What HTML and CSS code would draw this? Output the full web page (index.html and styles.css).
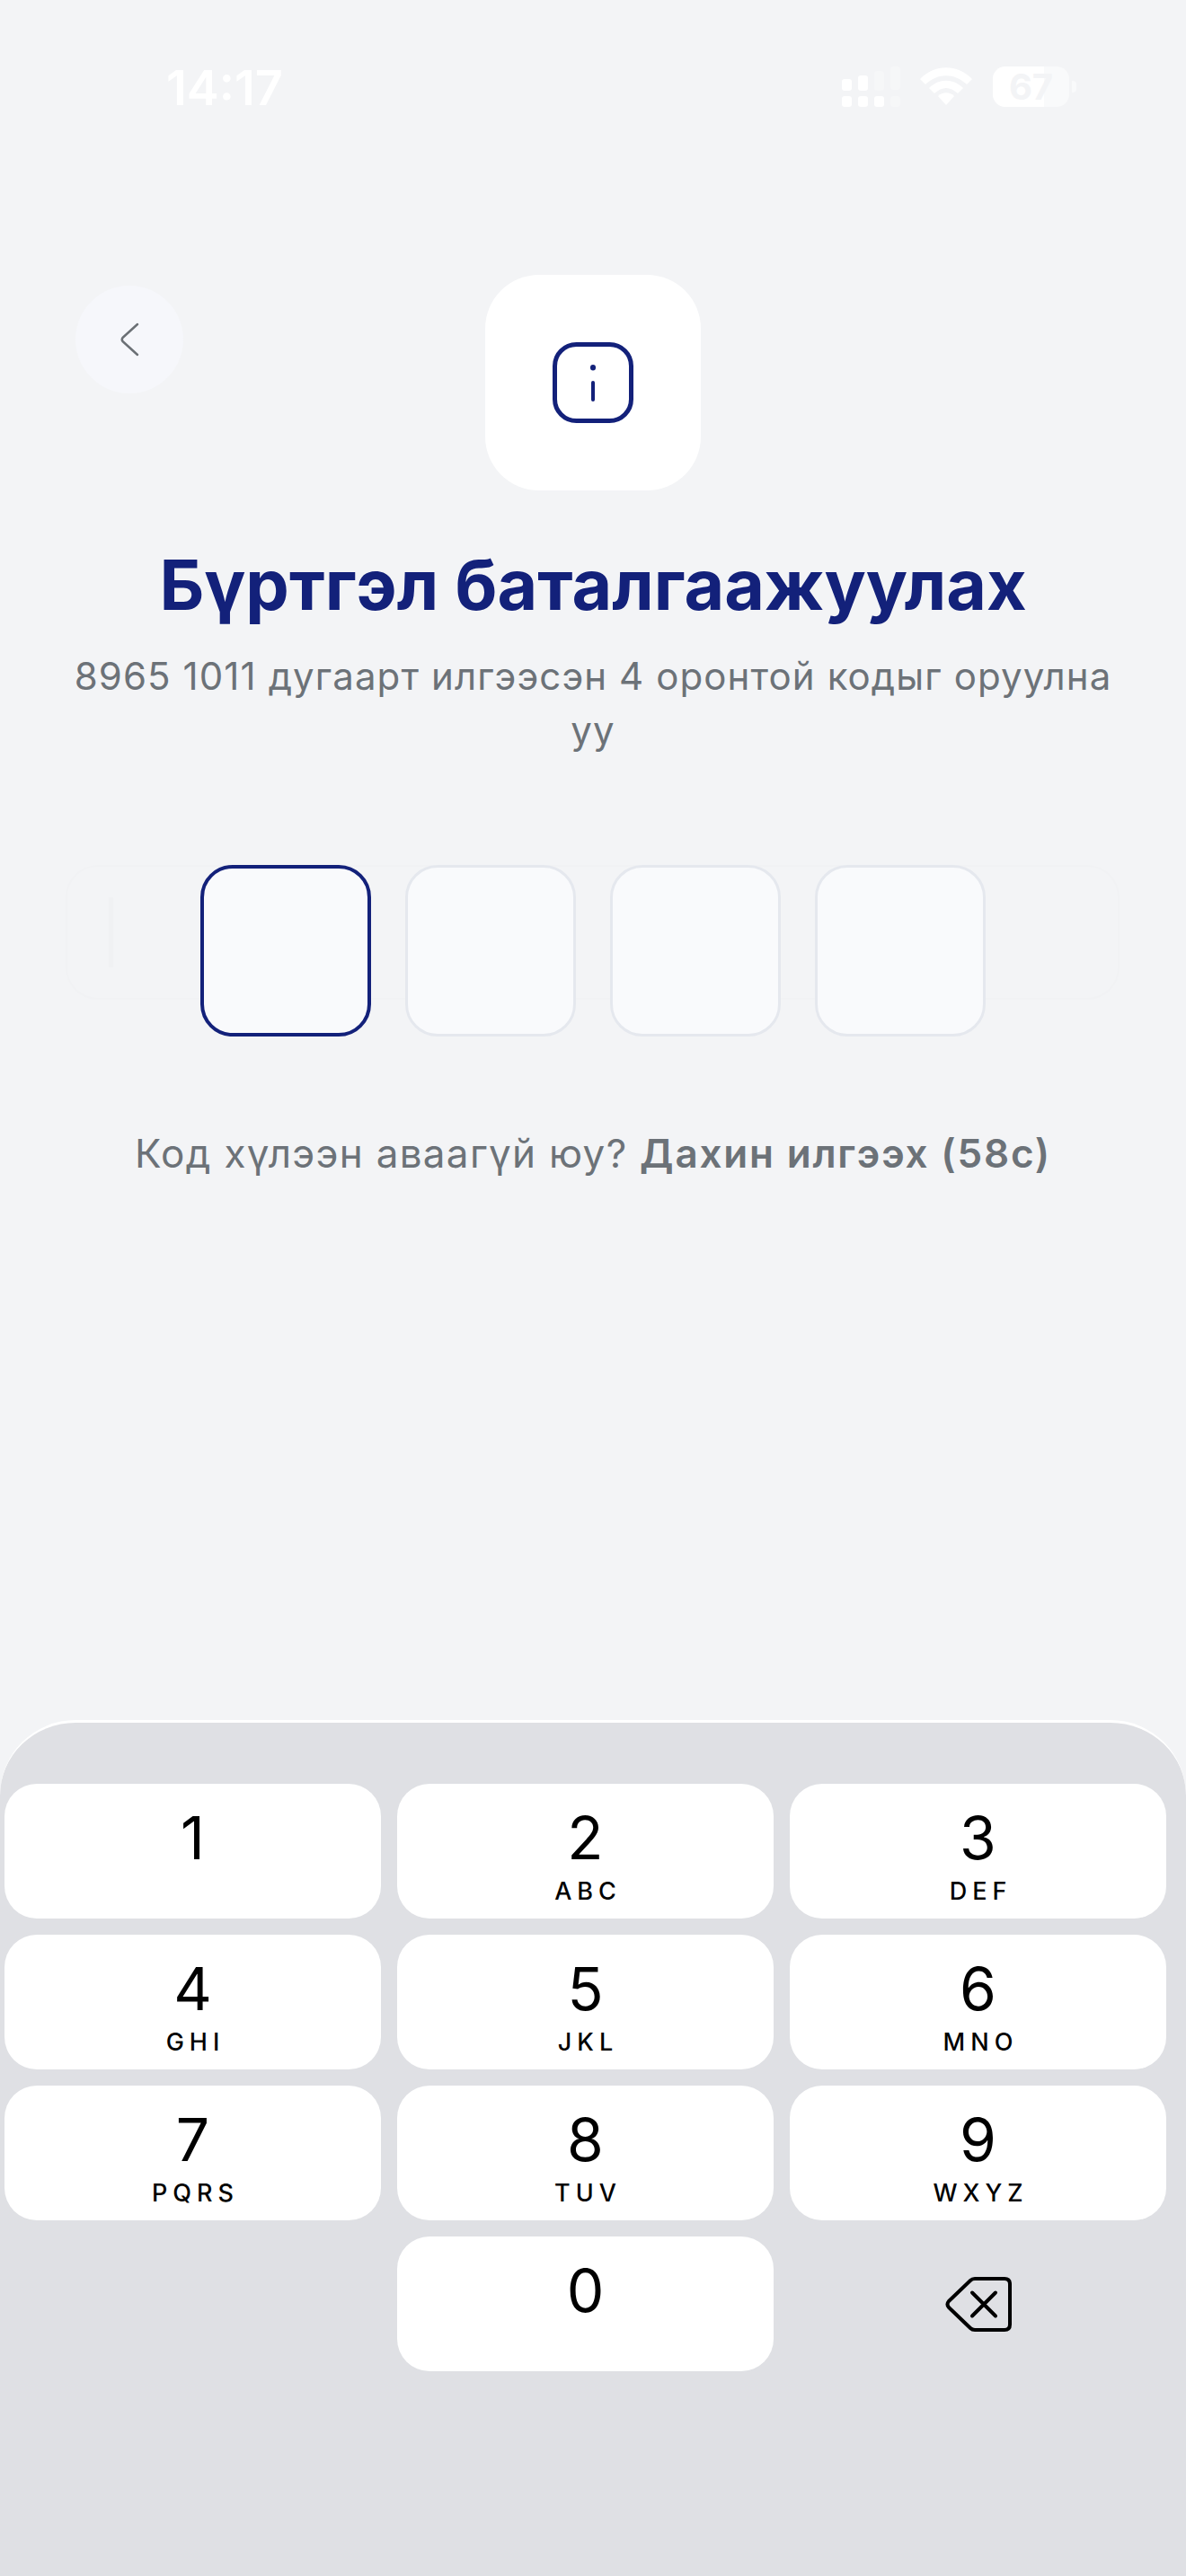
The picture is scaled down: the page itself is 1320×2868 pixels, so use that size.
FILE: index.html
```html
<!DOCTYPE html>

<html>

<head>
  <meta charset="utf-8">
  <title>Бүртгэл баталгаажуулах</title>
  <link rel="stylesheet" href="styles.css">
</head>

<body>

  <div class="screen">

    <div class="status-bar">
      <span class="time">14:17</span>
      <div class="status-icons">
        <svg class="signal" width="65" height="46" viewBox="0 0 65 46" fill="#fff">
          <rect x="0" y="14" width="11" height="13" rx="3" />
          <rect x="18" y="10" width="11" height="17" rx="3" />
          <rect x="36" y="5" width="11" height="22" rx="3" opacity=".25" />
          <rect x="54" y="0" width="11" height="26" rx="3" opacity=".25" />
          <rect x="0" y="33" width="11" height="12" rx="3" />
          <rect x="18" y="33" width="11" height="12" rx="3" />
          <rect x="36" y="33" width="11" height="12" rx="3" />
          <rect x="54" y="33" width="11" height="12" rx="3" opacity=".25" />
        </svg>
        <svg class="wifi" width="58" height="42" viewBox="0 0 58 42" fill="#fff">
          <path d="M0 13 C16 -4 42 -4 58 13 L52 19 C38 6 20 6 6 19 Z" />
          <path d="M10 23 C21 12 37 12 48 23 L42 29 C33 21 25 21 16 29 Z" />
          <path d="M20 32 C25 27 33 27 38 32 L29 42 Z" />
        </svg>
        <div class="battery">
          <div class="battery-body">
            <div class="battery-level"></div>
            <span class="battery-text">67</span>
          </div>
          <div class="battery-nub"></div>
        </div>
      </div>
    </div>

    <div class="top">
      <button type="button" class="back-btn">
        <svg width="24" height="38" viewBox="0 0 24 38" fill="none" stroke="#6b7075" stroke-width="2.5" stroke-linecap="round" stroke-linejoin="round">
          <path d="M21 2 L4.5 17 Q3 19 4.5 21 L21 36" />
        </svg>
      </button>
      <div class="info-card">
        <svg width="94" height="94" viewBox="0 0 94 94" fill="none" stroke="#13217a" stroke-width="5" stroke-linecap="round">
          <rect x="4.500" y="4.500" width="85" height="85" rx="24" />
          <path d="M47 47 V66" stroke-width="4" />
          <path d="M47 30 V30.500" stroke-width="6" />
        </svg>
      </div>
    </div>

    <h1 class="title">Бүртгэл баталгаажуулах</h1>
    <p class="subtitle">8965 1011 дугаарт илгээсэн 4 оронтой кодыг оруулна уу</p>

    <div class="otp">
      <div class="otp-input"><span class="otp-caret"></span></div>
      <div class="otp-box otp-box-active"></div>
      <div class="otp-box"></div>
      <div class="otp-box"></div>
      <div class="otp-box"></div>
    </div>

    <p class="resend">Код хүлээн аваагүй юу? <b>Дахин илгээх (58с)</b></p>

    <div class="keypad">
      <div class="key"><span class="digit">1</span><span class="letters"></span></div>
      <div class="key"><span class="digit">2</span><span class="letters">ABC</span></div>
      <div class="key"><span class="digit">3</span><span class="letters">DEF</span></div>
      <div class="key"><span class="digit">4</span><span class="letters">GHI</span></div>
      <div class="key"><span class="digit">5</span><span class="letters">JKL</span></div>
      <div class="key"><span class="digit">6</span><span class="letters">MNO</span></div>
      <div class="key"><span class="digit">7</span><span class="letters">PQRS</span></div>
      <div class="key"><span class="digit">8</span><span class="letters">TUV</span></div>
      <div class="key"><span class="digit">9</span><span class="letters">WXYZ</span></div>
      <div class="key key-empty"></div>
      <div class="key"><span class="digit">0</span><span class="letters"></span></div>
      <div class="key key-empty">
        <svg width="75" height="65" viewBox="0 0 75 65" fill="none" stroke="#000" stroke-width="4" stroke-linecap="round" stroke-linejoin="round">
          <path d="M34 4 H67 Q73 4 73 10 V55 Q73 61 67 61 H34 Q31 61 29 59 L5 36 Q2 32.500 5 29 L29 6 Q31 4 34 4 Z" />
          <path d="M31 19.500 L57 45.500 M57 19.500 L31 45.500" />
        </svg>
      </div>
    </div>

  </div>

</body>

</html>
```

FILE: styles.css
```css
* {
  box-sizing: border-box;
}

html,
body {
  margin: 0;
  padding: 0;
}

body {
  background: #f3f4f6;
  font-family: "Inter", "Noto Sans", sans-serif;
}

.screen {
  display: flex;
  flex-direction: column;
  height: 2868px;
  overflow: hidden;
}

/* Status bar */
.status-bar {
  display: flex;
  justify-content: space-between;
  align-items: flex-start;
  height: 306px;
  padding: 66px 122px 0 185px;
}

.time {
  color: #fff;
  font-size: 54px;
  font-weight: 600;
  line-height: 64px;
}

.status-icons {
  display: flex;
  align-items: flex-start;
  padding-top: 8px;
}

.signal {
  margin-right: 22px;
}

.wifi {
  margin-top: 1px;
  margin-right: 23px;
}

.battery {
  display: flex;
  align-items: center;
  gap: 3px;
}

.battery-body {
  position: relative;
  width: 85px;
  height: 45px;
  border-radius: 14px;
  background: rgba(255, 255, 255, .5);
  text-align: center;
}

.battery-level {
  position: absolute;
  left: 0;
  top: 0;
  bottom: 0;
  width: 57px;
  border-radius: 14px 0 0 14px;
  background: #fff;
}

.battery-text {
  position: relative;
  display: block;
  color: #f3f4f6;
  font-size: 40px;
  font-weight: 700;
  line-height: 45px;
}

.battery-nub {
  width: 5px;
  height: 13px;
  border-radius: 0 4px 4px 0;
  background: rgba(255, 255, 255, .5);
}

/* Back button + icon */
.top {
  display: grid;
  grid-template-columns: 1fr 240px 1fr;
  align-items: start;
  height: 240px;
}

.back-btn {
  display: flex;
  align-items: center;
  justify-content: center;
  width: 120px;
  height: 120px;
  margin: 12px 0 0 84px;
  padding: 0;
  border: 0;
  border-radius: 50%;
  background: #f6f7fb;
}

.info-card {
  display: flex;
  align-items: center;
  justify-content: center;
  width: 240px;
  height: 240px;
  border-radius: 60px;
  background: #fff;
}

/* Heading */
.title {
  margin: 60px 0 0;
  color: #13217a;
  font-size: 77px;
  font-weight: 700;
  line-height: 90px;
  text-align: center;
}

.subtitle {
  margin: 27px 74px 0;
  color: #6c7278;
  font-size: 42px;
  font-weight: 400;
  letter-spacing: 1.1px;
  line-height: 60px;
  text-align: center;
}

/* Code boxes */
.otp {
  position: relative;
  display: flex;
  justify-content: center;
  gap: 38px;
  margin-top: 120px;
}

.otp-input {
  position: absolute;
  left: 73px;
  top: 0;
  width: 1173px;
  height: 150px;
  border: 2px solid #f1f2f4;
  border-radius: 36px;
  background: #f3f4f6;
}

.otp-caret {
  position: absolute;
  left: 46px;
  top: 34px;
  width: 5px;
  height: 78px;
  background: #f0f1f3;
}

.otp-box {
  position: relative;
  width: 190px;
  height: 191px;
  border: 3px solid #e5e8ee;
  border-radius: 36px;
  background: #f9fafc;
}

.otp-box-active {
  border: 4px solid #13217a;
}

.resend {
  margin: 100px 0 0;
  color: #6c7278;
  font-size: 44px;
  letter-spacing: 1.3px;
  line-height: 60px;
  text-align: center;
}

.resend b {
  font-weight: 600;
  letter-spacing: 1.8px;
}

/* Number pad */
.keypad {
  display: grid;
  grid-template-columns: repeat(3, 419px);
  grid-auto-rows: 150px;
  gap: 18px;
  margin-top: auto;
  height: 953px;
  padding: 68px 0 0 5px;
  border-top: 3px solid #fff;
  border-radius: 84px 84px 0 0;
  background: #dfe0e4;
}

.key {
  display: flex;
  flex-direction: column;
  align-items: center;
  border-radius: 36px;
  background: #fff;
  color: #000;
}

.key-empty {
  justify-content: center;
  background: none;
}

.digit {
  margin-top: 20px;
  font-size: 66px;
  line-height: 80px;
}

.letters {
  margin-top: 4px;
  margin-right: -6px;
  font-size: 27px;
  font-weight: 500;
  letter-spacing: 6px;
  line-height: 32px;
}
```
